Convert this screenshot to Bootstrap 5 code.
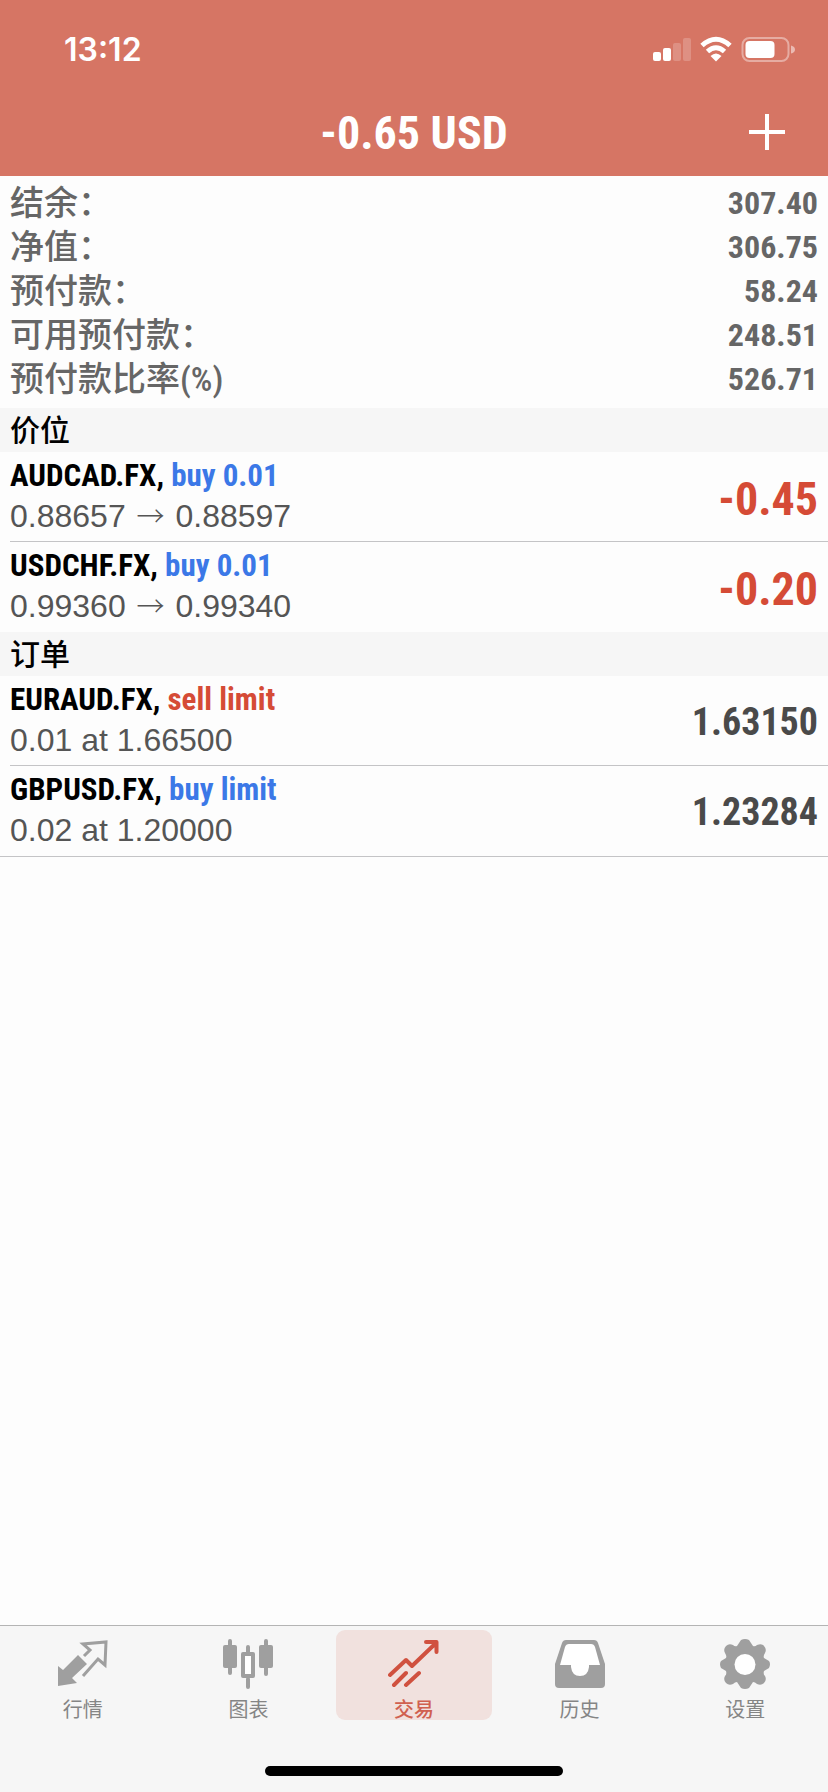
<!DOCTYPE html>
<html lang="zh-CN">
<head>
<meta charset="utf-8">
<meta name="viewport" content="width=device-width, initial-scale=1">
<title>交易</title>
<link href="https://cdn.jsdelivr.net/npm/bootstrap@5.3.0/dist/css/bootstrap.min.css" rel="stylesheet">
<style>
  :root { --brand: #d67564; --loss: #d54b36; --buy: #3b78e7; --idle: #9f9f9f; }
  body { font-family: "Liberation Sans", "Noto Sans CJK SC", sans-serif; background: #fdfdfd; color: #000; }
  .narrow { font-family: "Liberation Sans Narrow", "Roboto Condensed", "Noto Sans CJK SC", sans-serif; font-weight: 700; }
  .app-head { background: var(--brand); color: #fff; }
  .status-row { height: 88px; padding: 12px 32px 0 64px; }
  .clock { font: 600 32px/40px Inter, sans-serif; }
  .title-row { display: grid; grid-template-columns: 1fr auto 1fr; height: 88px; padding: 0 43px; }
  .title-row h1 { font-size: 46px; line-height: 56px; padding-top: 2px; }
  .add-btn { color: #fff; }
  .summary { padding: 5px 10px 7px; color: #666; }
  .summary dt { font-size: 34px; line-height: 44px; font-weight: 500; }
  .summary dd { font-size: 32px; line-height: 44px; }
  .group-title { background: #f6f6f6; font-size: 30px; line-height: 42px; font-weight: 500; padding: 2px 10px 0; }
  .trades > li { padding-left: 10px; }
  .trade { height: 90px; padding-right: 10px; border-bottom: 1px solid #c4c4c6; }
  .symbol { font-size: 31px; line-height: 40px; }
  .detail { font-size: 32px; line-height: 40px; color: #555; padding-bottom: 2px; }
  .arrow { font-family: "Noto Sans CJK SC", sans-serif; font-size: 28px; font-weight: 300; line-height: 1; padding: 0 2px; }
  .buy { color: var(--buy); }
  .loss { color: var(--loss); }
  .profit { font-size: 46px; line-height: 56px; padding-top: 4px; }
  .quote { font-size: 38px; line-height: 48px; padding-top: 2px; color: #4a4a4a; }
  .positions > li:last-child .trade { border-bottom-color: transparent; }
  .orders { border-bottom: 1px solid #c4c4c6; }
  .orders > li:last-child .trade { border-bottom: 0; }
  .tab-bar { background: #f6f6f6; border-top: 1px solid #b4b4b4; }
  .tab-row { padding-top: 4px; }
  .tab { height: 90px; margin: 0 5px; padding-top: 9px; gap: 7px; border-radius: 9px; color: var(--idle); font-size: 20px; line-height: 24px; }
  .tab span { color: #858585; }
  .tab.active { background: #f1e1de; color: #d0513f; }
  .tab.active span { color: #d0604f; font-weight: 500; }
  .tab svg { width: 52px; height: 52px; flex: none; }
  .home-space { height: 72px; padding-bottom: 16px; }
  .home-bar { width: 36%; height: 10px; background: #000; }
</style>
</head>
<body class="d-flex flex-column min-vh-100">
<header class="app-head">
  <div class="status-row d-flex align-items-center justify-content-between">
    <span class="clock">13:12</span>
    <svg width="144" height="28" viewBox="0 0 144 28" fill="#fff" aria-hidden="true">
      <rect x="1" y="16" width="8" height="9" rx="2"/>
      <rect x="11" y="12" width="8" height="13" rx="2"/>
      <rect x="21" y="7" width="8" height="18" rx="2" opacity=".2"/>
      <rect x="31" y="2" width="8" height="23" rx="2" opacity=".2"/>
      <g fill="none" stroke="#fff" stroke-width="5">
        <path d="M50 9.500Q64 -3 78 9.500"/>
        <path d="M55.500 15.500Q64 8 72.500 15.500"/>
      </g>
      <path d="M64 25.500L58.500 20Q64 15 69.500 20Z"/>
      <rect x="90.500" y="2" width="46" height="23" rx="7" fill="none" stroke="#fff" stroke-width="2" opacity=".4"/>
      <rect x="93.500" y="5" width="29" height="17" rx="4"/>
      <path d="M139 9.500Q143 10.500 143 13.500Q143 16.500 139 17.500Z" opacity=".5"/>
    </svg>
  </div>
  <div class="title-row align-items-center">
    <span></span>
    <h1 class="narrow m-0">-0.65 USD</h1>
    <button type="button" class="add-btn btn p-0 border-0 ms-auto d-flex" aria-label="新订单">
      <svg width="36" height="36" viewBox="0 0 36 36" stroke="currentColor" stroke-width="4"><path d="M18 0V36M0 18H36"/></svg>
    </button>
  </div>
</header>

<main class="flex-grow-1">
  <dl class="summary mb-0 narrow">
    <div class="d-flex justify-content-between"><dt>结余：</dt><dd class="m-0">307.40</dd></div>
    <div class="d-flex justify-content-between"><dt>净值：</dt><dd class="m-0">306.75</dd></div>
    <div class="d-flex justify-content-between"><dt>预付款：</dt><dd class="m-0">58.24</dd></div>
    <div class="d-flex justify-content-between"><dt>可用预付款：</dt><dd class="m-0">248.51</dd></div>
    <div class="d-flex justify-content-between"><dt>预付款比率(%)</dt><dd class="m-0">526.71</dd></div>
  </dl>

  <h2 class="group-title m-0">价位</h2>
  <ul class="trades positions list-unstyled m-0">
    <li><div class="trade d-flex align-items-center justify-content-between">
      <div><div class="symbol narrow">AUDCAD.FX, <span class="buy">buy 0.01</span></div>
      <div class="detail">0.88657 <span class="arrow">→</span> 0.88597</div></div>
      <div class="profit narrow loss">-0.45</div>
    </div></li>
    <li><div class="trade d-flex align-items-center justify-content-between">
      <div><div class="symbol narrow">USDCHF.FX, <span class="buy">buy 0.01</span></div>
      <div class="detail">0.99360 <span class="arrow">→</span> 0.99340</div></div>
      <div class="profit narrow loss">-0.20</div>
    </div></li>
  </ul>

  <h2 class="group-title m-0">订单</h2>
  <ul class="trades orders list-unstyled m-0">
    <li><div class="trade d-flex align-items-center justify-content-between">
      <div><div class="symbol narrow">EURAUD.FX, <span class="loss">sell limit</span></div>
      <div class="detail">0.01 at 1.66500</div></div>
      <div class="quote narrow">1.63150</div>
    </div></li>
    <li><div class="trade d-flex align-items-center justify-content-between">
      <div><div class="symbol narrow">GBPUSD.FX, <span class="buy">buy limit</span></div>
      <div class="detail">0.02 at 1.20000</div></div>
      <div class="quote narrow">1.23284</div>
    </div></li>
  </ul>
</main>

<nav class="tab-bar">
  <div class="tab-row row row-cols-5 g-0">
    <div class="col"><a href="#quotes" class="tab d-flex flex-column align-items-center text-decoration-none">
      <svg viewBox="0 0 52 52" fill="currentColor" aria-hidden="true">
        <path d="M1 27L6 31L21 16L30 25L15 39L20 44L1 47Z"/>
        <path d="M27 17L33 11L26 5L49 3L48 26L41 20L26 37" fill="none" stroke="currentColor" stroke-width="3"/>
      </svg><span>行情</span></a></div>
    <div class="col"><a href="#charts" class="tab d-flex flex-column align-items-center text-decoration-none">
      <svg viewBox="0 0 52 52" fill="currentColor" aria-hidden="true">
        <rect x="1" y="6" width="14" height="23" rx="2"/><rect x="37" y="6" width="14" height="23" rx="2"/>
        <path d="M8 2V34M44 2V35M26 8V14M26 40V48" stroke="currentColor" stroke-width="4" stroke-linecap="round"/>
        <rect x="21" y="15" width="10" height="22" fill="#fff" stroke="currentColor" stroke-width="4" stroke-linejoin="round"/>
      </svg><span>图表</span></a></div>
    <div class="col"><a href="#trade" class="tab active d-flex flex-column align-items-center text-decoration-none" aria-current="page">
      <svg viewBox="0 0 52 52" fill="none" stroke="currentColor" stroke-width="4" stroke-linecap="round" stroke-linejoin="round" aria-hidden="true">
        <path d="M2 36L18 21L24 27L48 4M38 3H48.500V13M6 46L18 34M18 46L31 34"/>
      </svg><span>交易</span></a></div>
    <div class="col"><a href="#history" class="tab d-flex flex-column align-items-center text-decoration-none">
      <svg viewBox="0 0 52 52" fill="currentColor" aria-hidden="true">
        <path d="M12 1H40Q43 1 44 4L51 25V45Q51 49 47 49H5Q1 49 1 45V25L8 4Q9 1 12 1Z"/>
        <path d="M15 5H37Q40 5 41 8L46 26H35V28Q34 37 26 37Q18 37 17 28V26H6L11 8Q12 5 15 5Z" fill="#fff"/>
      </svg><span>历史</span></a></div>
    <div class="col"><a href="#settings" class="tab d-flex flex-column align-items-center text-decoration-none">
      <svg viewBox="0 0 52 52" fill="currentColor" aria-hidden="true">
        <path d="M22 1Q26 -1 30 1L34 7Q36 8 38 6Q43 4 45 7Q48 10 46 14Q44 17 45 19L50 22Q52 25 50 29L45 32Q44 35 46 37Q48 41 45 44Q42 47 38 45Q36 43 34 43L30 49Q26 51 22 49L18 43Q16 43 14 45Q10 47 7 44Q4 41 6 37Q8 35 7 32L2 29Q0 25 2 22L7 19Q8 17 6 14Q4 10 7 7Q10 4 14 6Q16 8 18 7Z"/>
        <circle cx="26" cy="25.500" r="10.500" fill="#fff"/>
      </svg><span>设置</span></a></div>
  </div>
  <div class="home-space d-flex align-items-end justify-content-center"><div class="home-bar rounded-pill"></div></div>
</nav>
<script src="https://cdn.jsdelivr.net/npm/bootstrap@5.3.0/dist/js/bootstrap.bundle.min.js"></script>
</body>
</html>
